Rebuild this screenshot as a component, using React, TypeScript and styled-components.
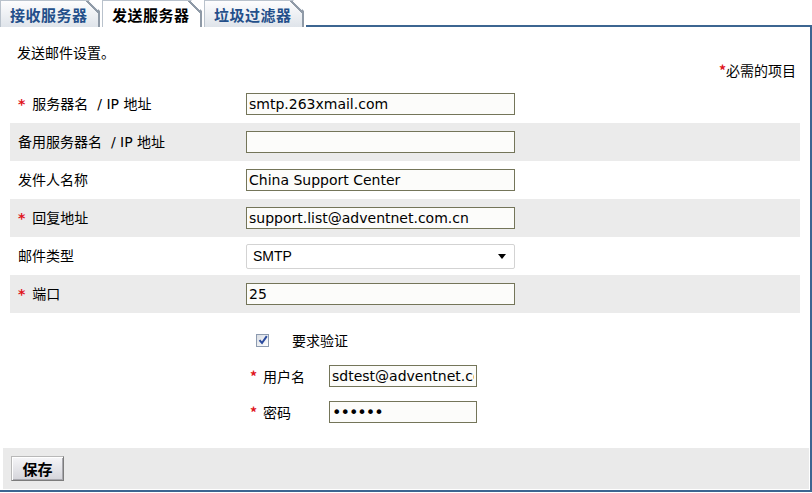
import styled, { createGlobalStyle } from "styled-components";

const GlobalStyle = createGlobalStyle`
  html, body {
    margin: 0;
    padding: 0;
    background: #fff;
  }
  body {
    font-family: "DejaVu Sans", "Noto Sans CJK SC", sans-serif;
    font-size: 14px;
    color: #000;
  }
`;

const Page = styled.div`
  width: 812px;
  height: 493px;
  display: flex;
  flex-direction: column;
  overflow: hidden;
`;

const TabBar = styled.div`
  display: flex;
  align-items: flex-end;
  height: 27px;
  gap: 2px;
`;

const Tab = styled.div<{ $active?: boolean }>`
  position: relative;
  width: 100px;
  height: 27px;
  box-sizing: border-box;
  padding-left: 9px;
  display: flex;
  align-items: center;
  font-family: "Noto Sans CJK SC", sans-serif;
  font-weight: bold;
  font-size: 15px;
  letter-spacing: 0.5px;
  line-height: 1;
  color: ${(p) => (p.$active ? "#000" : "#234f8a")};
  background: ${(p) =>
    p.$active ? "#fff" : "linear-gradient(#fdfdfe, #dfe4ea)"};
  border-left: 1px solid #b9c2cc;
  border-top: 1px solid #b9c2cc;
  border-right: 2px solid #8f9aa7;
  clip-path: polygon(0 0, calc(100% - 11px) 0, 100% 11px, 100% 100%, 0 100%);

  &::after {
    content: "";
    position: absolute;
    top: 0;
    right: 0;
    width: 12px;
    height: 12px;
    background: linear-gradient(
      to bottom left,
      transparent calc(50% - 1.5px),
      #8f9aa7 calc(50% - 1.5px),
      #8f9aa7 calc(50% + 0.5px),
      transparent calc(50% + 0.5px)
    );
  }
`;

const TabFill = styled.div`
  flex: 1;
  height: 27px;
  box-sizing: border-box;
  border-bottom: 2px solid #3c6591;
`;

const Panel = styled.div`
  height: 465px;
  box-sizing: border-box;
  border-right: 2px solid #3c6591;
  border-bottom: 2px solid #3c6591;
  display: flex;
  flex-direction: column;
`;

const Intro = styled.div`
  padding: 17px 0 0 17px;
  line-height: 16px;
  font-family: "Noto Sans CJK SC", sans-serif;
`;

const RequiredNote = styled.div`
  margin-top: 2px;
  padding-right: 14px;
  text-align: right;
  line-height: 16px;
  font-family: "Noto Sans CJK SC", sans-serif;
`;

const Star = styled.span<{ $gap?: number }>`
  color: #e0141c;
  font-weight: bold;
  font-size: 14px;
  margin-right: ${(p) => p.$gap ?? 7}px;
`;

const FormTable = styled.div`
  margin: 7px 0 0 10px;
  width: 790px;
  display: flex;
  flex-direction: column;
`;

const Row = styled.div<{ $shade?: boolean }>`
  height: 38px;
  display: grid;
  grid-template-columns: 236px 1fr;
  align-items: center;
  background: ${(p) => (p.$shade ? "#ebebeb" : "transparent")};
`;

const Label = styled.div<{ $indent?: number }>`
  padding-left: ${(p) => p.$indent ?? 8}px;
  white-space: pre;
  line-height: 18px;
`;

const Field = styled.input<{ $width?: number }>`
  width: ${(p) => p.$width ?? 269}px;
  height: 22px;
  box-sizing: border-box;
  border: 1px solid #747559;
  background: #fcfcfa;
  padding: 0 2px;
  margin: 0;
  font-family: "DejaVu Sans", sans-serif;
  font-size: ${(p) => (p.type === "password" ? 16 : 14)}px;
  letter-spacing: ${(p) => (p.type === "password" ? "-1px" : "0")};
  color: #000;
  outline: none;
`;

const SelectBox = styled.div`
  width: 269px;
  height: 25px;
  box-sizing: border-box;
  border: 1px solid #d3d3d3;
  border-radius: 2px;
  background: #fff;
  display: flex;
  align-items: center;
  justify-content: space-between;
  padding: 0 8px 0 6px;
  font-family: "Liberation Sans", sans-serif;
  font-size: 14px;
`;

const AuthSection = styled.div`
  margin-top: 9px;
  padding-left: 250px;
  display: flex;
  flex-direction: column;
`;

const CheckRow = styled.div`
  height: 36px;
  display: flex;
  align-items: center;
  gap: 23px;
  padding-left: 6px;
  font-family: "Noto Sans CJK SC", sans-serif;
`;

const CheckBox = styled.span`
  width: 13px;
  height: 13px;
  box-sizing: border-box;
  border: 1px solid #8d9bb0;
  background: linear-gradient(135deg, #d9dde3, #ffffff);
  display: flex;
  align-items: center;
  justify-content: center;
`;

const AuthRow = styled.div`
  height: 36px;
  display: grid;
  grid-template-columns: 79px 148px;
  align-items: center;
  font-family: "Noto Sans CJK SC", sans-serif;
`;

const Footer = styled.div`
  margin: auto 1px 1px 3px;
  height: 41px;
  background: #eaeaea;
  display: flex;
  align-items: center;
  padding-left: 8px;
`;

const SaveButton = styled.button`
  width: 53px;
  height: 25px;
  box-sizing: border-box;
  border: 1px solid #7c7c7c;
  border-top-color: #b8b8b8;
  border-left-color: #b8b8b8;
  box-shadow: inset 1px 1px 0 #fff, inset -1px -1px 0 #a8a8ae;
  background: linear-gradient(#f6f6f8, #d4d4da);
  font-family: "Noto Sans CJK SC", sans-serif;
  font-weight: bold;
  font-size: 15px;
  line-height: 1;
  color: #000;
  padding: 0;
`;

const rows = [
  { label: "服务器名  / IP 地址", required: true, value: "smtp.263xmail.com" },
  { label: "备用服务器名  / IP 地址", required: false, value: "" },
  { label: "发件人名称", required: false, value: "China Support Center" },
  { label: "回复地址", required: true, value: "support.list@adventnet.com.cn" },
];

export default function App() {
  return (
    <Page>
      <GlobalStyle />
      <TabBar>
        <Tab>接收服务器</Tab>
        <Tab $active>发送服务器</Tab>
        <Tab>垃圾过滤器</Tab>
        <TabFill />
      </TabBar>
      <Panel>
        <Intro>发送邮件设置。</Intro>
        <RequiredNote>
          <Star $gap={0}>*</Star>必需的项目
        </RequiredNote>
        <FormTable>
          {rows.map((r, i) => (
            <Row key={r.label} $shade={i % 2 === 1}>
              <Label>
                {r.required && <Star>*</Star>}
                {r.label}
              </Label>
              <Field readOnly defaultValue={r.value} />
            </Row>
          ))}
          <Row>
            <Label>邮件类型</Label>
            <SelectBox>
              <span>SMTP</span>
              <svg width="8" height="5" viewBox="0 0 8 5">
                <path d="M0 0h8L4 5z" fill="#000" />
              </svg>
            </SelectBox>
          </Row>
          <Row $shade>
            <Label>
              <Star>*</Star>端口
            </Label>
            <Field readOnly defaultValue="25" />
          </Row>
        </FormTable>
        <AuthSection>
          <CheckRow>
            <CheckBox>
              <svg width="10" height="10" viewBox="0 0 10 10">
                <path
                  d="M1.5 5.2 L4 8 L8.8 1.2"
                  fill="none"
                  stroke="#2a4a9e"
                  strokeWidth="2"
                />
              </svg>
            </CheckBox>
            要求验证
          </CheckRow>
          <AuthRow>
            <Label $indent={0}>
              <Star $gap={6}>*</Star>用户名
            </Label>
            <Field $width={148} readOnly defaultValue="sdtest@adventnet.com.cn" />
          </AuthRow>
          <AuthRow>
            <Label $indent={0}>
              <Star $gap={6}>*</Star>密码
            </Label>
            <Field $width={148} type="password" readOnly defaultValue="123456" />
          </AuthRow>
        </AuthSection>
        <Footer>
          <SaveButton>保存</SaveButton>
        </Footer>
      </Panel>
    </Page>
  );
}
